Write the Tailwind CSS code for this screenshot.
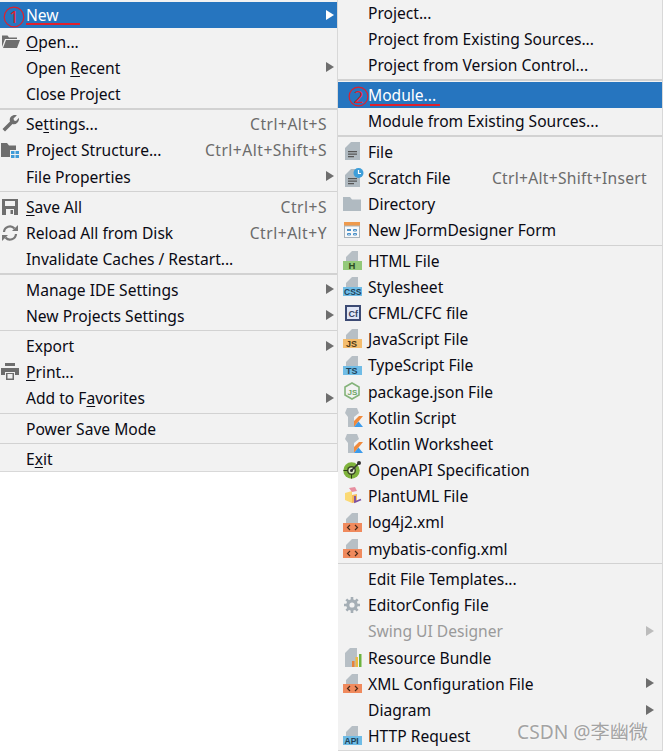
<!DOCTYPE html>
<html><head><meta charset="utf-8"><script src="https://cdn.jsdelivr.net/npm/@tailwindcss/browser@4"></script></head>
<body class="bg-white">
<div class="relative w-[664px] h-[751px] overflow-hidden bg-white font-['Noto_Sans','Noto_Sans_CJK_SC',sans-serif] text-[15.6px] text-[#0a0a14] flex items-start">

<!-- left menu -->
<div class="w-[338px] h-[472px] bg-[#f2f2f2] border-r border-b border-[#d8d8d8] pt-[2px] shrink-0">
  <div class="flex items-center h-[26.2px] bg-[#2675bf] text-white"><span class="w-[26px]"></span><span class="flex-1 pt-[2px]"><u class="underline underline-offset-2">N</u>ew</span><svg class="w-[8px] h-[10px] mr-[3px]" viewBox="0 0 8 10"><path d="M0 0L8 5L0 10Z" fill="#fff"/></svg></div>
  <div class="flex items-center h-[26.2px]"><span class="w-[26px] pl-[2px]"><svg class="w-[18px] h-[14px]" viewBox="0 0 18 14"><path d="M0 1.5V13L3 5H15V3.5H7L5.5 1.5Z" fill="#6e6e6e"/><path d="M4 6H18L15 14H1Z" fill="#6e6e6e"/></svg></span><span class="flex-1 pt-[2px]"><u class="underline underline-offset-2">O</u>pen...</span></div>
  <div class="flex items-center h-[26.2px]"><span class="w-[26px]"></span><span class="flex-1 pt-[2px]">Open <u class="underline underline-offset-2">R</u>ecent</span><svg class="w-[8px] h-[10px] mr-[3px]" viewBox="0 0 8 10"><path d="M0 0L8 5L0 10Z" fill="#6e6e6e"/></svg></div>
  <div class="flex items-center h-[26.2px]"><span class="w-[26px]"></span><span class="flex-1 pt-[2px]">Close Project</span></div>
  <div class="h-[4.1px] flex items-center"><div class="w-full h-[2px] bg-[#d2d2d2]"></div></div>

  <div class="flex items-center h-[26.2px]"><span class="w-[26px] pl-[2px]"><svg class="w-[17px] h-[17px]" viewBox="0 0 17 17"><path d="M0.5 14L8 6.5C7 3.5 9 0 13 0C14 0 15 .3 15 .3L11.5 3.5L12 5.5L14 6L17 2.8C17.5 6.5 14.5 10 10.5 9L3 16.5Z" fill="#6e6e6e"/></svg></span><span class="flex-1 pt-[2px]">Se<u class="underline underline-offset-2">t</u>tings...</span><span class="pt-[2px] text-[#6b6b6b] tracking-[0.5px] mr-[10px]">Ctrl+Alt+S</span></div>
  <div class="flex items-center h-[26.2px]"><span class="w-[26px] pl-[1px]"><svg class="w-[19px] h-[15px]" viewBox="0 0 19 15"><path d="M0 0H6L8 2.5H15V7H9V14H0Z" fill="#6e6e6e"/><path d="M10 8H13.5V11H10ZM14.5 8H18V11H14.5ZM10 12H13.5V15H10ZM14.5 12H18V15H14.5Z" fill="#3f9bd8"/></svg></span><span class="flex-1 pt-[2px]">Project Structure...</span><span class="pt-[2px] text-[#6b6b6b] tracking-[0.5px] mr-[10px]">Ctrl+Alt+Shift+S</span></div>
  <div class="flex items-center h-[26.2px]"><span class="w-[26px]"></span><span class="flex-1 pt-[2px]">File Properties</span><svg class="w-[8px] h-[10px] mr-[3px]" viewBox="0 0 8 10"><path d="M0 0L8 5L0 10Z" fill="#6e6e6e"/></svg></div>
  <div class="h-[4.1px] flex items-center"><div class="w-full h-px bg-[#d2d2d2]"></div></div>

  <div class="flex items-center h-[26.2px]"><span class="w-[26px] pl-[2px]"><svg class="w-[16px] h-[16px]" viewBox="0 0 16 16"><path fill-rule="evenodd" d="M0 0H16V16H0ZM3 2V7H13V2ZM4 10V16H12V10ZM8.5 11H11V15H8.5Z" fill="#6e6e6e"/></svg></span><span class="flex-1 pt-[2px]"><u class="underline underline-offset-2">S</u>ave All</span><span class="pt-[2px] text-[#6b6b6b] tracking-[0.5px] mr-[10px]">Ctrl+S</span></div>
  <div class="flex items-center h-[26.2px]"><span class="w-[26px] pl-[2px]"><svg class="w-[16px] h-[16px]" viewBox="0 0 16 16"><path d="M2 7A6 6 0 0 1 12.5 3.5" fill="none" stroke="#777" stroke-width="2.2"/><path d="M10 6H16V0Z" fill="#777"/><path d="M14 9A6 6 0 0 1 3.5 12.5" fill="none" stroke="#777" stroke-width="2.2"/><path d="M6 10H0V16Z" fill="#777"/></svg></span><span class="flex-1 pt-[2px]">Reload All from Disk</span><span class="pt-[2px] text-[#6b6b6b] tracking-[0.5px] mr-[10px]">Ctrl+Alt+Y</span></div>
  <div class="flex items-center h-[26.2px]"><span class="w-[26px]"></span><span class="flex-1 pt-[2px]">Invalidate Caches / Restart...</span></div>
  <div class="h-[4.1px] flex items-center"><div class="w-full h-[2px] bg-[#d2d2d2]"></div></div>

  <div class="flex items-center h-[26.2px]"><span class="w-[26px]"></span><span class="flex-1 pt-[2px]">Manage IDE Settings</span><svg class="w-[8px] h-[10px] mr-[3px]" viewBox="0 0 8 10"><path d="M0 0L8 5L0 10Z" fill="#6e6e6e"/></svg></div>
  <div class="flex items-center h-[26.2px]"><span class="w-[26px]"></span><span class="flex-1 pt-[2px]">New Projects Settings</span><svg class="w-[8px] h-[10px] mr-[3px]" viewBox="0 0 8 10"><path d="M0 0L8 5L0 10Z" fill="#6e6e6e"/></svg></div>
  <div class="h-[4.1px] flex items-center"><div class="w-full h-px bg-[#d2d2d2]"></div></div>

  <div class="flex items-center h-[26.2px]"><span class="w-[26px]"></span><span class="flex-1 pt-[2px]">Export</span><svg class="w-[8px] h-[10px] mr-[3px]" viewBox="0 0 8 10"><path d="M0 0L8 5L0 10Z" fill="#6e6e6e"/></svg></div>
  <div class="flex items-center h-[26.2px]"><span class="w-[26px] pl-[1px]"><svg class="w-[18px] h-[17px]" viewBox="0 0 18 17"><path fill-rule="evenodd" d="M4 0H14V3H4ZM0 5H18V12H14V9H4V12H0ZM5 10H13V17H5ZM6.5 11V15.5H11.5V11Z" fill="#6e6e6e"/></svg></span><span class="flex-1 pt-[2px]"><u class="underline underline-offset-2">P</u>rint...</span></div>
  <div class="flex items-center h-[26.2px]"><span class="w-[26px]"></span><span class="flex-1 pt-[2px]">Add to F<u class="underline underline-offset-2">a</u>vorites</span><svg class="w-[8px] h-[10px] mr-[3px]" viewBox="0 0 8 10"><path d="M0 0L8 5L0 10Z" fill="#6e6e6e"/></svg></div>
  <div class="h-[4.1px] flex items-center"><div class="w-full h-px bg-[#d2d2d2]"></div></div>

  <div class="flex items-center h-[26.2px]"><span class="w-[26px]"></span><span class="flex-1 pt-[2px]">Power Save Mode</span></div>
  <div class="h-[4.1px] flex items-center"><div class="w-full h-px bg-[#d2d2d2]"></div></div>

  <div class="flex items-center h-[26.2px]"><span class="w-[26px]"></span><span class="flex-1 pt-[2px]">E<u class="underline underline-offset-2">x</u>it</span></div>
</div>

<!-- right menu -->
<div class="w-[325px] h-[751px] bg-[#f2f2f2] border-r border-b border-[#d8d8d8] shrink-0">
  <div class="flex items-center h-[26px]"><span class="w-[30px]"></span><span class="flex-1 pt-[2px]">Project...</span></div>
  <div class="flex items-center h-[26px]"><span class="w-[30px]"></span><span class="flex-1 pt-[2px]">Project from Existing Sources...</span></div>
  <div class="flex items-center h-[26px]"><span class="w-[30px]"></span><span class="flex-1 pt-[2px]">Project from Version Control...</span></div>
  <div class="h-[4.1px] flex items-center"><div class="w-full h-[2px] bg-[#d2d2d2]"></div></div>

  <div class="flex items-center h-[26px] bg-[#2675bf] text-white"><span class="w-[30px]"></span><span class="flex-1 pt-[2px]">Module...</span></div>
  <div class="flex items-center h-[26.2px]"><span class="w-[30px]"></span><span class="flex-1 pt-[2px]">Module from Existing Sources...</span></div>
  <div class="h-[4.1px] flex items-center"><div class="w-full h-[2px] bg-[#d2d2d2]"></div></div>

  <div class="flex items-center h-[26.2px]"><span class="w-[30px] pl-[7px]"><svg class="w-[15px] h-[18px]" viewBox="0 0 15 18"><path d="M6 0H15V18H0V6Z" fill="#b0bac1"/><path d="M3 9H12V10.3H3ZM3 11.5H12V12.8H3ZM3 14H9V15.3H3Z" fill="#555"/></svg></span><span class="flex-1 pt-[2px]">File</span></div>
  <div class="flex items-center h-[26.2px]"><span class="w-[30px] pl-[7px]"><svg class="w-[19px] h-[19px]" viewBox="0 0 19 19"><path d="M6 1H15V19H0V7Z" fill="#b0bac1"/><path d="M3 10H12V11.3H3ZM3 12.5H12V13.8H3ZM3 15H9V16.3H3Z" fill="#555"/><circle cx="13.5" cy="5" r="5" fill="#3e9ed9"/><path d="M13.5 2V5.5H16" fill="none" stroke="#fff" stroke-width="1.2"/></svg></span><span class="flex-1 pt-[2px]">Scratch File</span><span class="pt-[2px] text-[#6b6b6b] tracking-[0.3px] mr-[15px]">Ctrl+Alt+Shift+Insert</span></div>
  <div class="flex items-center h-[26.2px]"><span class="w-[30px] pl-[5px]"><svg class="w-[18px] h-[14px]" viewBox="0 0 18 14"><path d="M0 0H7L9 2.5H18V14H0Z" fill="#b0bac1"/></svg></span><span class="flex-1 pt-[2px]">Directory</span></div>
  <div class="flex items-center h-[26.2px]"><span class="w-[30px] pl-[6px]"><svg class="w-[16px] h-[16px]" viewBox="0 0 16 16"><rect width="16" height="16" fill="#e8e8e8"/><rect width="16" height="4" fill="#ee9a4d"/><rect x=".5" y="4" width="15" height="11.5" fill="#f8f8f8" stroke="#aab3ba"/><path d="M3 7H7V9H3Z" fill="#4a90c8"/><path d="M9.5 7.5H12.5V9H9.5ZM9.5 11.5H12.5V13H9.5ZM3.5 11.5H6.5V13H3.5Z" fill="none" stroke="#4a90c8"/></svg></span><span class="flex-1 pt-[2px]">New JFormDesigner Form</span></div>
  <div class="h-[4.1px] flex items-center"><div class="w-full h-px bg-[#d2d2d2]"></div></div>

  <div class="flex items-center h-[26.2px]"><span class="w-[30px] pl-[5px]"><svg class="w-[19px] h-[19px]" viewBox="0 0 19 19"><path d="M9 0H15V10H3V6Z" fill="#b7bfc5"/><rect y="10" width="19" height="9" fill="#93c97a"/><text x="5.5" y="18" font-size="9.5" font-weight="700" fill="#2c4a22" font-family="Liberation Sans">H</text></svg></span><span class="flex-1 pt-[2px]">HTML File</span></div>
  <div class="flex items-center h-[26.2px]"><span class="w-[30px] pl-[5px]"><svg class="w-[19px] h-[19px]" viewBox="0 0 19 19"><path d="M9 0H15V10H3V6Z" fill="#b7bfc5"/><rect y="10" width="19" height="9" fill="#6fbce6"/><text x="1" y="18" font-size="8.5" font-weight="700" fill="#1f4258" font-family="Liberation Sans">CSS</text></svg></span><span class="flex-1 pt-[2px]">Stylesheet</span></div>
  <div class="flex items-center h-[26.2px]"><span class="w-[30px] pl-[7px]"><svg class="w-[16px] h-[16px]" viewBox="0 0 16 16"><rect x="1" y="1" width="14" height="14" fill="#dfe5f5" stroke="#3c4a73" stroke-width="2"/><text x="3.5" y="12" font-size="9" font-weight="700" fill="#33415f" font-family="Liberation Sans">Cf</text></svg></span><span class="flex-1 pt-[2px]">CFML/CFC file</span></div>
  <div class="flex items-center h-[26.2px]"><span class="w-[30px] pl-[5px]"><svg class="w-[19px] h-[19px]" viewBox="0 0 19 19"><path d="M9 0H15V10H3V6Z" fill="#b7bfc5"/><rect y="10" width="19" height="9" fill="#f4bd6e"/><text x="3" y="18" font-size="9" font-weight="700" fill="#4e3a17" font-family="Liberation Sans">JS</text></svg></span><span class="flex-1 pt-[2px]">JavaScript File</span></div>
  <div class="flex items-center h-[26.2px]"><span class="w-[30px] pl-[5px]"><svg class="w-[19px] h-[19px]" viewBox="0 0 19 19"><path d="M9 0H15V10H3V6Z" fill="#b7bfc5"/><rect y="10" width="19" height="9" fill="#6fbce6"/><text x="3" y="18" font-size="9" font-weight="700" fill="#1f4258" font-family="Liberation Sans">TS</text></svg></span><span class="flex-1 pt-[2px]">TypeScript File</span></div>
  <div class="flex items-center h-[26.2px]"><span class="w-[30px] pl-[6px]"><svg class="w-[16px] h-[18px]" viewBox="0 0 16 18"><path d="M8 1L15 5V13L8 17L1 13V5Z" fill="none" stroke="#84b37a" stroke-width="1.6"/><text x="3.6" y="12.5" font-size="8" font-weight="700" fill="#6fa565" font-family="Liberation Sans">JS</text></svg></span><span class="flex-1 pt-[2px]">package.json File</span></div>
  <div class="flex items-center h-[26.2px]"><span class="w-[30px] pl-[7px]"><svg class="w-[19px] h-[19px]" viewBox="0 0 19 19"><path d="M2 0H12L14 5L9 9V19H3V9L0 5Z" fill="#b7bfc5"/><path d="M9 19V13L14 8H18L9 19Z" fill="#f08a3c"/><path d="M9 19L13.5 13.5L18 19Z" fill="#3d9bea"/></svg></span><span class="flex-1 pt-[2px]">Kotlin Script</span></div>
  <div class="flex items-center h-[26.2px]"><span class="w-[30px] pl-[7px]"><svg class="w-[19px] h-[19px]" viewBox="0 0 19 19"><path d="M2 0H12L14 5L9 9V19H3V9L0 5Z" fill="#b7bfc5"/><path d="M9 19V13L14 8H18L9 19Z" fill="#f08a3c"/><path d="M9 19L13.5 13.5L18 19Z" fill="#3d9bea"/></svg></span><span class="flex-1 pt-[2px]">Kotlin Worksheet</span></div>
  <div class="flex items-center h-[26.2px]"><span class="w-[30px] pl-[5px]"><svg class="w-[19px] h-[19px]" viewBox="0 0 19 19"><circle cx="8.5" cy="10.5" r="8.2" fill="#7fb33c"/><circle cx="8.5" cy="10.5" r="4.5" fill="#3d4a28"/><circle cx="8.5" cy="10.5" r="3" fill="#dfe8cc"/><circle cx="8.5" cy="10.5" r="1.5" fill="#333"/><path d="M8.5 10.5L16 3" stroke="#333" stroke-width="1.6"/><circle cx="16" cy="3" r="2" fill="#333"/><path d="M0.5 10.5H5M8.5 14V18.5" stroke="#2e3b1a" stroke-width="1"/></svg></span><span class="flex-1 pt-[2px]">OpenAPI Specification</span></div>
  <div class="flex items-center h-[26.2px]"><span class="w-[30px] pl-[6px]"><svg class="w-[18px] h-[18px]" viewBox="0 0 18 18"><path d="M1 6L8 4V16L1 13Z" fill="#fbd974"/><path d="M8 8L13 7V15L8 16Z" fill="#f6b95a"/><path d="M5 1L11 0L13 4L8 5Z" fill="#e88fa0"/><path d="M11 9L11 15L17 12.5" fill="none" stroke="#7a4fa3" stroke-width="1.8"/></svg></span><span class="flex-1 pt-[2px]">PlantUML File</span></div>
  <div class="flex items-center h-[26.2px]"><span class="w-[30px] pl-[5px]"><svg class="w-[19px] h-[19px]" viewBox="0 0 19 19"><path d="M9 0H15V10H3V6Z" fill="#b7bfc5"/><rect y="10" width="19" height="9" fill="#f08a5d"/><path d="M7 12L4.5 14.5L7 17M12 12L14.5 14.5L12 17" fill="none" stroke="#4a2a1a" stroke-width="1.2"/></svg></span><span class="flex-1 pt-[2px]">log4j2.xml</span></div>
  <div class="flex items-center h-[26.2px]"><span class="w-[30px] pl-[5px]"><svg class="w-[19px] h-[19px]" viewBox="0 0 19 19"><path d="M9 0H15V10H3V6Z" fill="#b7bfc5"/><rect y="10" width="19" height="9" fill="#f08a5d"/><path d="M7 12L4.5 14.5L7 17M12 12L14.5 14.5L12 17" fill="none" stroke="#4a2a1a" stroke-width="1.2"/></svg></span><span class="flex-1 pt-[2px]">mybatis-config.xml</span></div>
  <div class="h-[4.1px] flex items-center"><div class="w-full h-px bg-[#d2d2d2]"></div></div>

  <div class="flex items-center h-[26.2px]"><span class="w-[30px]"></span><span class="flex-1 pt-[2px]">Edit File Templates...</span></div>
  <div class="flex items-center h-[26.2px]"><span class="w-[30px] pl-[6px]"><svg class="w-[16px] h-[16px]" viewBox="0 0 16 16"><circle cx="8" cy="8" r="4.2" fill="none" stroke="#a5aeb5" stroke-width="3.2"/><path d="M8 0V16M0 8H16M2.3 2.3L13.7 13.7M13.7 2.3L2.3 13.7" stroke="#a5aeb5" stroke-width="2.6" stroke-dasharray="3 10 3"/></svg></span><span class="flex-1 pt-[2px]">EditorConfig File</span></div>
  <div class="flex items-center h-[26.2px] text-[#9a9a9a]"><span class="w-[30px]"></span><span class="flex-1 pt-[2px]">Swing UI Designer</span><svg class="w-[8px] h-[10px] mr-[8px]" viewBox="0 0 8 10"><path d="M0 0L8 5L0 10Z" fill="#bcbcbc"/></svg></div>
  <div class="flex items-center h-[26.2px]"><span class="w-[30px] pl-[7px]"><svg class="w-[17px] h-[19px]" viewBox="0 0 17 19"><path d="M5 0H12V19H0V5Z" fill="#b7bfc5"/><rect x="7" y="13" width="2.5" height="6" fill="#e8823a"/><rect x="10.5" y="9" width="2.5" height="10" fill="#f0b840"/><rect x="14" y="6" width="2.5" height="13" fill="#6cb33f"/></svg></span><span class="flex-1 pt-[2px]">Resource Bundle</span></div>
  <div class="flex items-center h-[26.2px]"><span class="w-[30px] pl-[5px]"><svg class="w-[19px] h-[19px]" viewBox="0 0 19 19"><path d="M9 0H15V10H3V6Z" fill="#b7bfc5"/><rect y="10" width="19" height="9" fill="#f08a5d"/><path d="M7 12L4.5 14.5L7 17M12 12L14.5 14.5L12 17" fill="none" stroke="#4a2a1a" stroke-width="1.2"/></svg></span><span class="flex-1 pt-[2px]">XML Configuration File</span><svg class="w-[8px] h-[10px] mr-[8px]" viewBox="0 0 8 10"><path d="M0 0L8 5L0 10Z" fill="#6e6e6e"/></svg></div>
  <div class="flex items-center h-[26.2px]"><span class="w-[30px]"></span><span class="flex-1 pt-[2px]">Diagram</span><svg class="w-[8px] h-[10px] mr-[8px]" viewBox="0 0 8 10"><path d="M0 0L8 5L0 10Z" fill="#6e6e6e"/></svg></div>
  <div class="flex items-center h-[26.2px]"><span class="w-[30px] pl-[5px]"><svg class="w-[19px] h-[19px]" viewBox="0 0 19 19"><path d="M9 0H15V10H3V6Z" fill="#b7bfc5"/><rect y="10" width="19" height="9" fill="#6fbce6"/><text x="1.5" y="18" font-size="8.5" font-weight="700" fill="#1f4258" font-family="Liberation Sans">API</text></svg></span><span class="flex-1 pt-[2px]">HTTP Request</span></div>
</div>

<!-- annotations -->
<svg class="absolute left-[3px] top-[6px] w-[22px] h-[22px]" viewBox="0 0 22 22"><circle cx="11" cy="11" r="9.8" fill="none" stroke="#e0202c" stroke-width="1.2"/><text x="11" y="17" text-anchor="middle" font-size="17" fill="#e0202c" font-family="Noto Sans">1</text></svg>
<div class="absolute left-[26px] top-[23px] w-[54px] h-[2px] bg-[#e0202c]"></div>
<svg class="absolute left-[348px] top-[86px] w-[21px] h-[21px]" viewBox="0 0 21 21"><circle cx="10.5" cy="10.5" r="9.4" fill="none" stroke="#e0202c" stroke-width="1.2"/><text x="10.5" y="16.5" text-anchor="middle" font-size="17" fill="#e0202c" font-family="Noto Sans">2</text></svg>
<div class="absolute left-[370px] top-[104px] w-[70px] h-[2px] bg-[#e0202c]"></div>
<div class="absolute left-[517px] top-[719px] text-[19.2px] leading-[26px] text-[#a3a3a3] [text-shadow:0_0_2px_#fff]">CSDN @李幽微</div>
</div>
</body></html>
